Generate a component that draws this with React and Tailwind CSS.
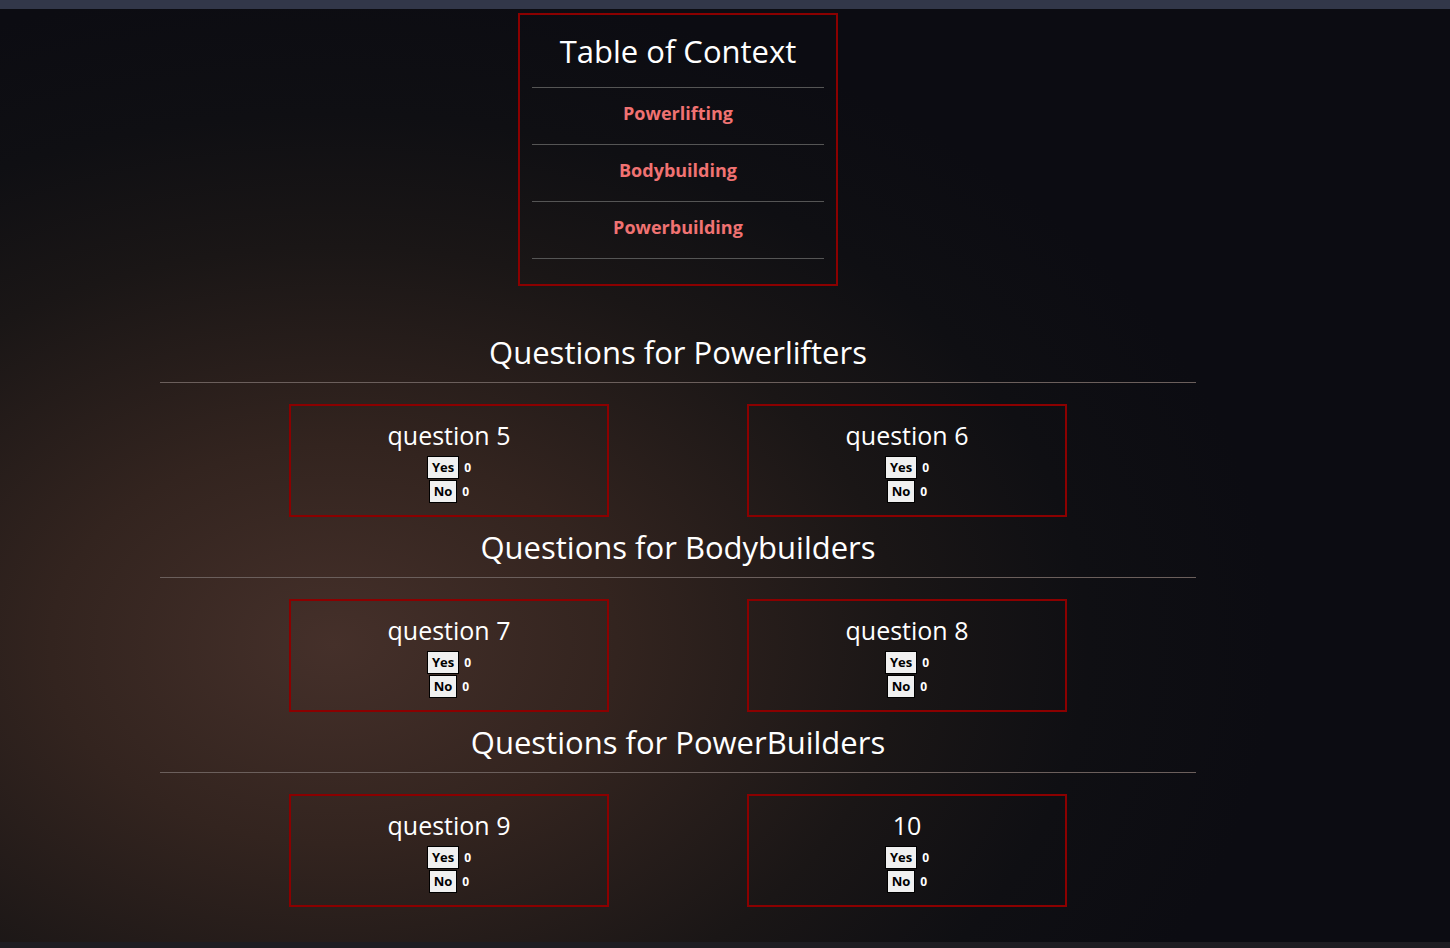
import React from 'react';

const sections = [
  {
    title: 'Questions for Powerlifters',
    questions: ['question 5', 'question 6'],
  },
  {
    title: 'Questions for Bodybuilders',
    questions: ['question 7', 'question 8'],
  },
  {
    title: 'Questions for PowerBuilders',
    questions: ['question 9', '10'],
  },
];

const links = ['Powerlifting', 'Bodybuilding', 'Powerbuilding'];

function VoteRow({ label }) {
  return (
    <div className="flex items-center justify-center">
      <button className="h-[23px] px-[4px] bg-[#f0f0f0] border border-black text-[13px] font-bold text-black leading-none">
        {label}
      </button>
      <span className="ml-[5px] text-[12px] font-bold text-white">0</span>
    </div>
  );
}

function QuestionCard({ label }) {
  return (
    <div className="w-[320px] h-[113px] border-2 border-[#8b0000] flex flex-col items-center pt-[13px]">
      <h3 className="text-[25px] leading-[32px] text-white">{label}</h3>
      <div className="mt-[5px] flex flex-col gap-[1px]">
        <VoteRow label="Yes" />
        <VoteRow label="No" />
      </div>
    </div>
  );
}

export default function App() {
  return (
    <div
      className="min-h-[948px] w-full flex flex-col bg-[radial-gradient(ellipse_65%_70%_at_23%_68%,#45302a_0%,#33241f_30%,#1a1616_60%,#0f0f13_80%,#0c0c12_100%)]"
      style={{ fontFamily: '"Open Sans", "Noto Sans", sans-serif' }}
    >
      <div className="h-[9px] bg-[#323749]" />
      <div className="flex-1 w-[1036px] ml-[160px]">
        <div className="w-[320px] mx-auto mt-[4px] border-2 border-[#8b0000] px-[12px] pb-[25px]">
          <h1 className="text-[31px] text-white text-center leading-[40px] pt-[16px] pb-[16px] border-b border-[#555]">
            Table of Context
          </h1>
          {links.map((l) => (
            <div key={l} className="h-[57px] flex justify-center pt-[12px] border-b border-[#555]">
              <a href="#" className="text-[18px] leading-[26px] font-bold text-[#f07272]">
                {l}
              </a>
            </div>
          ))}
        </div>

        <div className="mt-[46px]">
          {sections.map((s) => (
            <section key={s.title}>
              <h2 className="text-[31px] leading-[40px] text-white text-center mb-[10px]">{s.title}</h2>
              <hr className="border-0 h-[1px] bg-[#6b5f5c]" />
              <div className="flex justify-center gap-[138px] mt-[21px] mb-[10px]">
                {s.questions.map((q) => (
                  <QuestionCard key={q} label={q} />
                ))}
              </div>
            </section>
          ))}
        </div>
      </div>
      <div className="h-[6px] bg-[#1e1d22]" />
    </div>
  );
}
